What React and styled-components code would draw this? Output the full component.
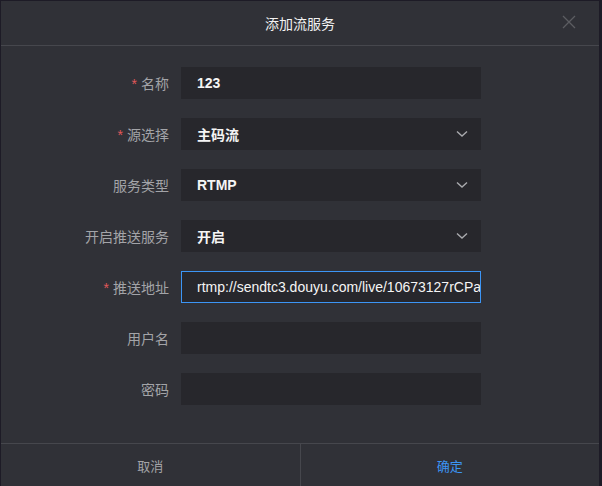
import React from "react";
import styled, { createGlobalStyle } from "styled-components";

const Global = createGlobalStyle`
  html, body { margin: 0; padding: 0; background: #1d1b26; }
  body { font-family: "Liberation Sans", "Noto Sans CJK SC", sans-serif; }
  * { box-sizing: border-box; }
`;

const Modal = styled.div`
  margin: 1px 0 0 1px;
  width: 598px;
  height: 485px;
  background: #303137;
  display: flex;
  flex-direction: column;
`;

const Header = styled.div`
  position: relative;
  height: 45px;
  border-bottom: 1px solid #46474d;
  display: flex;
  align-items: center;
  justify-content: center;
  color: #f2f2f2;
  font-size: 14px;
  font-family: "Noto Sans CJK SC", sans-serif;
`;

const Close = styled.button`
  position: absolute;
  right: 22px;
  top: 13px;
  width: 16px;
  height: 16px;
  padding: 0;
  border: 0;
  background: none;
  display: flex;
`;

const Body = styled.div`
  flex: 1;
  padding-top: 21px;
  display: flex;
  flex-direction: column;
  gap: 19px;
`;

const Row = styled.div`
  display: flex;
  align-items: center;
  height: 32px;
`;

const Label = styled.div`
  width: 180px;
  padding-right: 12px;
  text-align: right;
  color: #a3a4a8;
  font-size: 14px;
  font-family: "Noto Sans CJK SC", sans-serif;
`;

const Star = styled.span`
  color: #e0585a;
  margin-right: 4px;
  font-family: "Liberation Sans", sans-serif;
`;

const Field = styled.div`
  position: relative;
  width: 300px;
  height: 32px;
  background: #27272c;
  border: 1px solid ${(p) => (p.$focus ? "#3c95f5" : "#27272c")};
  display: flex;
  align-items: center;
  padding-left: 15px;
  color: #f5f5f5;
  font-size: 14px;
  overflow: hidden;
  white-space: nowrap;
`;

const Text = styled.span`
  font-family: "Liberation Sans", "Noto Sans CJK SC", sans-serif;
  font-weight: ${(p) => (p.$light ? 400 : 700)};
`;

const Chevron = styled.svg`
  position: absolute;
  right: 12px;
  top: 11px;
`;

const Footer = styled.div`
  height: 43px;
  border-top: 1px solid #46474d;
  display: flex;
`;

const FootBtn = styled.button`
  flex: 1;
  border: 0;
  background: none;
  font-size: 13px;
  font-family: "Noto Sans CJK SC", sans-serif;
  color: ${(p) => (p.$primary ? "#3c95f5" : "#a3a4a8")};
  & + & { border-left: 1px solid #46474d; }
`;

const Down = () => (
  <Chevron width="12" height="8" viewBox="0 0 12 8">
    <path d="M1 1.5 L6 6 L11 1.5" fill="none" stroke="#a9aaae" strokeWidth="1.4" />
  </Chevron>
);

const rows = [
  { label: "名称", req: true, value: "123" },
  { label: "源选择", req: true, value: "主码流", select: true },
  { label: "服务类型", value: "RTMP", select: true },
  { label: "开启推送服务", value: "开启", select: true },
  { label: "推送地址", req: true, value: "rtmp://sendtc3.douyu.com/live/10673127rCPau", focus: true },
  { label: "用户名", value: "" },
  { label: "密码", value: "" },
];

export default function App() {
  return (
    <>
      <Global />
      <Modal>
        <Header>
          添加流服务
          <Close>
            <svg width="16" height="16" viewBox="0 0 16 16">
              <path d="M2 2 L14 14 M14 2 L2 14" stroke="#5c5d62" strokeWidth="1.3" />
            </svg>
          </Close>
        </Header>
        <Body>
          {rows.map((r) => (
            <Row key={r.label}>
              <Label>
                {r.req && <Star>*</Star>}
                {r.label}
              </Label>
              <Field $focus={r.focus}>
                <Text $light={r.focus}>{r.value}</Text>
                {r.select && <Down />}
              </Field>
            </Row>
          ))}
        </Body>
        <Footer>
          <FootBtn>取消</FootBtn>
          <FootBtn $primary>确定</FootBtn>
        </Footer>
      </Modal>
    </>
  );
}
